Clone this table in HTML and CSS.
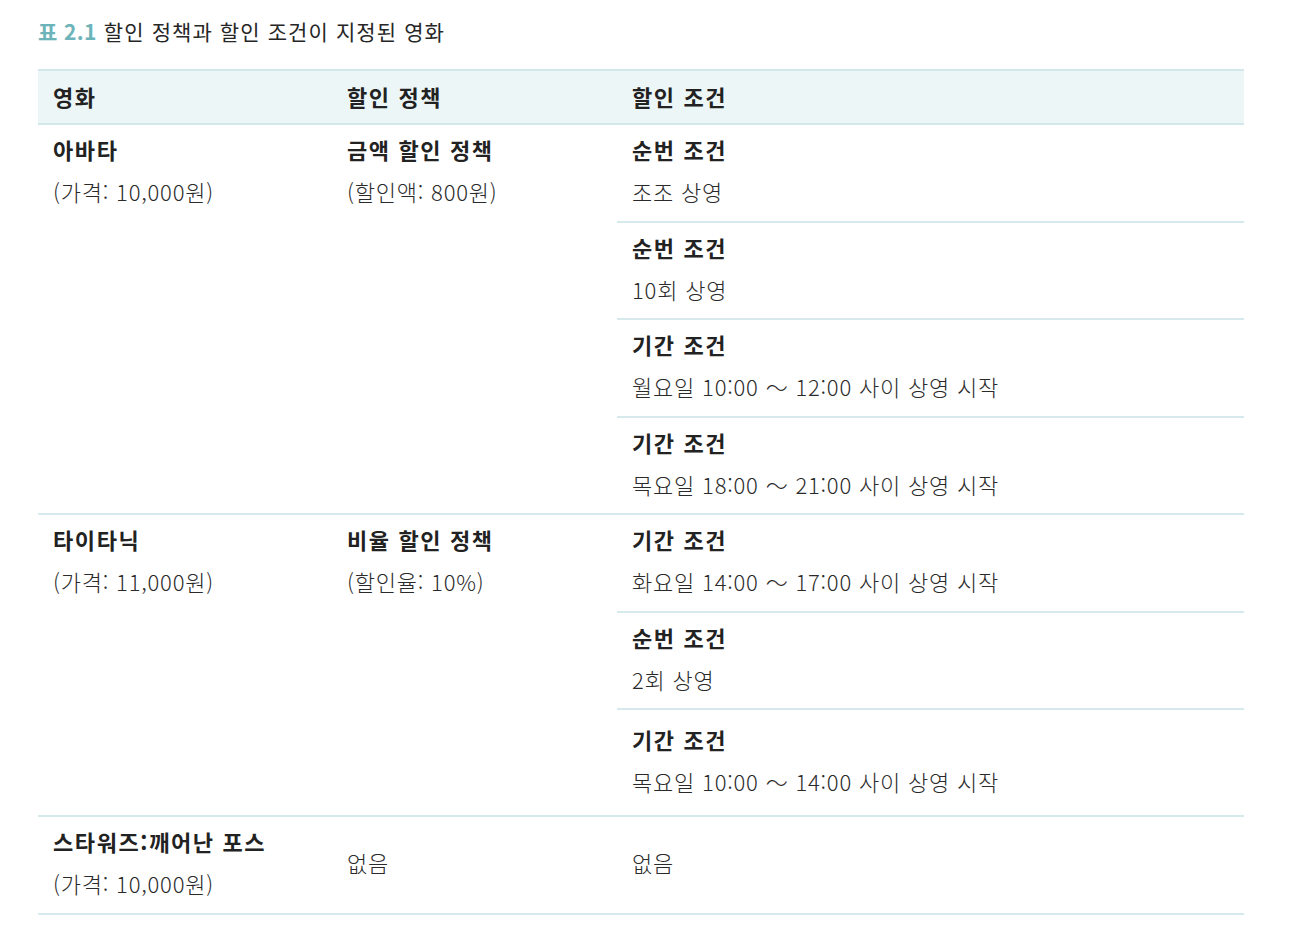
FILE: index.html
```html
<!DOCTYPE html>
<html lang="ko">
<head>
<meta charset="utf-8">
<title>표 2.1</title>
<link rel="stylesheet" href="styles.css">
</head>
<body>
<div class="page">
  <p class="caption"><span class="caption-num">표 2.1</span> 할인 정책과 할인 조건이 지정된 영화</p>
  <table class="movies">
    <colgroup>
      <col class="c-movie">
      <col class="c-policy">
      <col class="c-cond">
    </colgroup>
    <thead>
      <tr class="head-row">
        <th>영화</th>
        <th>할인 정책</th>
        <th>할인 조건</th>
      </tr>
    </thead>
    <tbody>
      <tr class="sub">
        <td rowspan="4" class="group-cell"><b class="title">아바타</b><span class="desc">(가격: 10,000원)</span></td>
        <td rowspan="4" class="group-cell"><b class="title">금액 할인 정책</b><span class="desc">(할인액: 800원)</span></td>
        <td class="cond"><b class="title">순번 조건</b><span class="desc">조조 상영</span></td>
      </tr>
      <tr class="sub">
        <td class="cond"><b class="title">순번 조건</b><span class="desc">10회 상영</span></td>
      </tr>
      <tr class="sub">
        <td class="cond"><b class="title">기간 조건</b><span class="desc">월요일 10:00 ～ 12:00 사이 상영 시작</span></td>
      </tr>
      <tr class="sub">
        <td class="cond"><b class="title">기간 조건</b><span class="desc">목요일 18:00 ～ 21:00 사이 상영 시작</span></td>
      </tr>
      <tr class="sub">
        <td rowspan="3" class="group-cell"><b class="title">타이타닉</b><span class="desc">(가격: 11,000원)</span></td>
        <td rowspan="3" class="group-cell"><b class="title">비율 할인 정책</b><span class="desc">(할인율: 10%)</span></td>
        <td class="cond"><b class="title">기간 조건</b><span class="desc">화요일 14:00 ～ 17:00 사이 상영 시작</span></td>
      </tr>
      <tr class="sub">
        <td class="cond"><b class="title">순번 조건</b><span class="desc">2회 상영</span></td>
      </tr>
      <tr class="sub tall">
        <td class="cond"><b class="title">기간 조건</b><span class="desc">목요일 10:00 ～ 14:00 사이 상영 시작</span></td>
      </tr>
      <tr class="sub">
        <td class="mid"><b class="title">스타워즈:깨어난 포스</b><span class="desc">(가격: 10,000원)</span></td>
        <td class="mid"><span class="desc">없음</span></td>
        <td class="mid"><span class="desc">없음</span></td>
      </tr>
    </tbody>
  </table>
</div>
</body>
</html>
```

FILE: styles.css
```css
html, body {
  margin: 0;
  padding: 0;
  background: #ffffff;
}

body {
  font-family: "Noto Sans CJK KR", "Noto Sans", sans-serif;
  color: #222222;
}

.page {
  padding: 16px 0 0 38px;
}

.caption {
  margin: 0 0 23px 0;
  font-size: 21px;
  line-height: 30px;
  font-weight: 400;
  color: #262626;
  letter-spacing: 1.1px;
}

.caption-num {
  color: #6db4ba;
  font-weight: 700;
  letter-spacing: 0.4px;
}

.movies {
  width: 1206px;
  border-collapse: collapse;
  table-layout: fixed;
  font-size: 22px;
}

.c-movie { width: 294px; }
.c-policy { width: 285px; }
.c-cond { width: 627px; }

.head-row th {
  background: #ecf6f7;
  border-top: 2px solid #d3e8eb;
  border-bottom: 2px solid #d3e8eb;
  height: 50px;
  padding: 0 15px 2px 15px;
  text-align: left;
  font-weight: 700;
  font-size: 22px;
  line-height: 30px;
  color: #222222;
  letter-spacing: 1.6px;
}

.movies td {
  padding: 0 15px;
  text-align: left;
}

.sub {
  height: 97.5px;
}

.sub.tall {
  height: 107px;
}

.group-cell {
  vertical-align: top;
  padding-top: 3px !important;
  border-bottom: 2px solid #d6eaed;
}

.cond,
.mid {
  vertical-align: middle;
  padding-bottom: 5px !important;
  border-bottom: 2px solid #d6eaed;
}

.title {
  display: block;
  font-weight: 700;
  line-height: 42px;
  color: #222222;
  letter-spacing: 1.6px;
}

.desc {
  display: block;
  font-weight: 300;
  line-height: 42px;
  color: #2a2a2a;
  letter-spacing: 0.8px;
}
```
